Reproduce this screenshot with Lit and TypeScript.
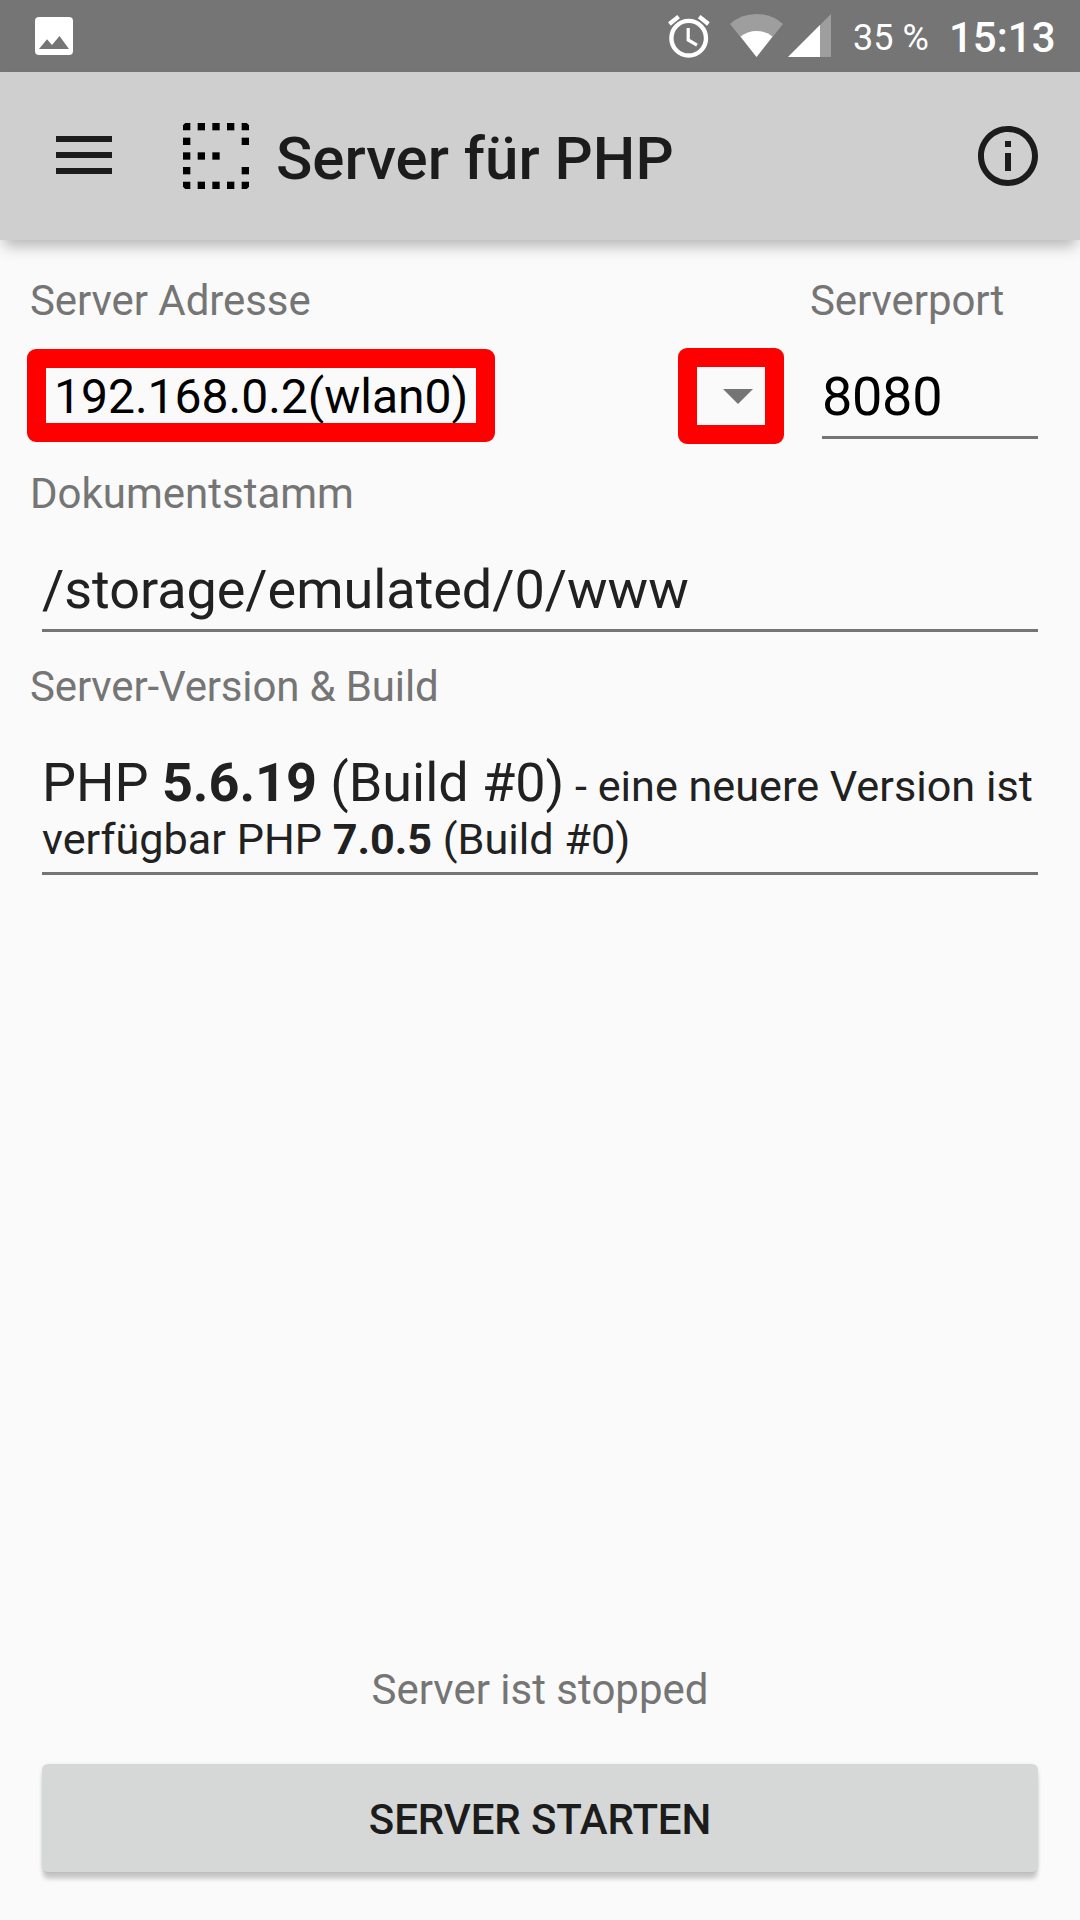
import { LitElement, html, css, svg } from "lit";
import { customElement, property } from "lit/decorators.js";

const DOTS: Array<[number, number]> = [
  [7, 3], [11, 3], [15, 3],
  [3, 7], [19, 7],
  [3, 11], [7, 11], [11, 11],
  [3, 15], [19, 15],
  [7, 19], [11, 19], [15, 19],
];

@customElement("status-bar")
class StatusBar extends LitElement {
  static styles = css`
    :host {
      display: flex;
      align-items: flex-start;
      height: 72px;
      background: #757575;
      color: #fff;
      white-space: nowrap;
    }
    svg { display: block; flex: none; }
    .picture { margin: 17px 0 0 35px; }
    .spacer { flex: 1; }
    .alarm { margin: 15px 20px 0 0; }
    .wifi { margin: 14px 5px 0 0; }
    .signal { margin: 14px 0 0 0; }
    .battery { width: 96px; margin-left: 22px; font-size: 36px; line-height: 42px; padding-top: 17px; }
    .clock { width: 131px; font-size: 42px; font-weight: 500; line-height: 50px; padding-top: 13px; }
  `;

  render() {
    return html`
      <svg class="picture" width="38" height="38" viewBox="0 0 38 38">
        <rect width="38" height="38" rx="4" fill="#fff" />
        <path d="M4 32L12 22.3L17 28L24.5 19L34 32Z" fill="#757575" />
      </svg>
      <div class="spacer"></div>
      <svg class="alarm" width="42" height="43" viewBox="0 0 42 43">
        <circle cx="20.7" cy="23.2" r="17.3" fill="none" stroke="#fff" stroke-width="4.4" />
        <path d="M20.2 13V25L29 30.2" fill="none" stroke="#fff" stroke-width="3.2" />
        <path d="M1.4 9L10.6 1.6M31.2 1.6L40.4 9" fill="none" stroke="#fff" stroke-width="4.2" />
      </svg>
      <svg class="wifi" width="53" height="43" viewBox="0 0 53 43">
        <path d="M0 10Q11 0 26.5 0T53 10L26.5 43Z" fill="#9e9e9e" />
        <path d="M10.5 22.6Q17.5 17 26.5 17T42.5 22.6L26.5 43Z" fill="#fff" />
      </svg>
      <svg class="signal" width="43" height="43" viewBox="0 0 43 43">
        <path d="M43 0V43H0Z" fill="#9e9e9e" />
        <path d="M32 11V43H0Z" fill="#fff" />
      </svg>
      <div class="battery">35 %</div>
      <div class="clock">15:13</div>
    `;
  }
}

@customElement("app-bar")
class AppBar extends LitElement {
  @property() heading = "";

  static styles = css`
    :host {
      display: flex;
      align-items: center;
      height: 168px;
      padding: 0 36px 0 56px;
      box-sizing: border-box;
      background: #cfcfcf;
      color: #1c1c1c;
      box-shadow: 0 10px 14px -4px rgba(0, 0, 0, 0.28);
      white-space: nowrap;
    }
    svg { display: block; flex: none; }
    .menu { margin: 0 71px 2px 0; }
    .logo { margin-right: 27px; }
    .title { flex: 1; font-size: 60px; font-weight: 500; line-height: 70px; padding-top: 6px; }
  `;

  render() {
    return html`
      <svg class="menu" width="56" height="38" viewBox="0 0 56 38">
        <path d="M0 0H56V6H0ZM0 16H56V22H0ZM0 32H56V38H0Z" fill="#1c1c1c" />
      </svg>
      <svg class="logo" width="66" height="66" viewBox="3 3 18 18">
        ${DOTS.map(([x, y]) => svg`<rect x=${x} y=${y} width="2" height="2" />`)}
        <path d="M3 5V3.600L3.600 3H5V5ZM19 3H20.400L21 3.600V5H19ZM3 19H5V21H3.600L3 20.400ZM19 19H21V20.400L20.400 21H19Z" />
      </svg>
      <div class="title">${this.heading}</div>
      <svg class="info" width="72" height="72" viewBox="0 0 24 24">
        <path fill="#1c1c1c" d="M11 17h2v-6h-2v6zm1-15C6.480 2 2 6.480 2 12s4.480 10 10 10 10-4.480 10-10S17.520 2 12 2zm0 18c-4.410 0-8-3.590-8-8s3.590-8 8-8 8 3.590 8 8-3.590 8-8 8zM11 9h2V7h-2v2z" />
      </svg>
    `;
  }
}

@customElement("app-root")
class AppRoot extends LitElement {
  static styles = css`
    :host {
      display: flex;
      flex-direction: column;
      height: 1920px;
      overflow: hidden;
      background: #fafafa;
      color: #212121;
      font-family: Roboto, "Liberation Sans", sans-serif;
      font-size: 42px;
      line-height: 50px;
      white-space: nowrap;
    }
    status-bar, app-bar { flex: none; }
    .form { display: flex; flex-direction: column; gap: 30px; padding: 36px 42px 0 30px; }
    .row { display: flex; }
    .address { width: 780px; }
    .port { flex: 1; }
    .label { color: #757575; }
    .tight { letter-spacing: -0.07px; }
    .tighter { letter-spacing: -0.15px; }
    .input {
      margin-left: 12px;
      padding: 39px 0 7px;
      border-bottom: 3px solid #757575;
      font-size: 54px;
      line-height: 64px;
      letter-spacing: -0.04px;
    }
    .number { color: #000; letter-spacing: -0.3px; }
    .details { font-size: 43.2px; line-height: 50px; letter-spacing: 0; }
    .large { font-size: 54px; line-height: 64px; letter-spacing: -0.04px; }
    .spinner {
      position: relative;
      display: flex;
      justify-content: space-between;
      align-items: flex-start;
      padding: 43px 57px 0 24px;
      color: #000;
      font-size: 48px;
      line-height: 56px;
    }
    .caret { display: block; margin-top: 20px; }
    .mark { position: absolute; box-sizing: border-box; border: 19px solid #f00; border-radius: 9px; }
    .mark-address { left: -3px; top: 23px; width: 468px; height: 93px; }
    .mark-caret { left: 648px; top: 22px; width: 106px; height: 96px; }
    .footer { margin-top: auto; padding: 0 42px 48px; display: flex; flex-direction: column; gap: 49px; }
    .state { text-align: center; color: #757575; }
    .button {
      height: 108px;
      padding: 3px 0 0;
      border: 0;
      border-radius: 6px;
      background: #d6d8d7;
      color: #1c1c1c;
      font: 500 42px/50px Roboto, "Liberation Sans", sans-serif;
      letter-spacing: -0.12px;
      box-shadow: 0 8px 4px -1px rgba(0, 0, 0, 0.19), 0 1px 4px rgba(0, 0, 0, 0.1);
    }
  `;

  render() {
    return html`
      <status-bar></status-bar>
      <app-bar heading="Server für PHP"></app-bar>
      <div class="form">
        <div class="row">
          <div class="address">
            <div class="label tight">Server Adresse</div>
            <div class="spinner">
              <span>192.168.0.2(wlan0)</span>
              <svg class="caret" width="30" height="15" viewBox="0 0 30 15"><path d="M0 0H30L15 15Z" fill="#757575" /></svg>
              <div class="mark mark-address"></div>
              <div class="mark mark-caret"></div>
            </div>
          </div>
          <div class="port">
            <div class="label tight">Serverport</div>
            <div class="input number">8080</div>
          </div>
        </div>
        <div>
          <div class="label">Dokumentstamm</div>
          <div class="input">/storage/emulated/0/www</div>
        </div>
        <div>
          <div class="label tighter">Server-Version &amp; Build</div>
          <div class="input details"><span class="large">PHP <b>5.6.19</b> (Build #0)</span> - eine neuere Version ist<br />verfügbar PHP <b>7.0.5</b> (Build #0)</div>
        </div>
      </div>
      <div class="footer">
        <div class="state">Server ist stopped</div>
        <button class="button">SERVER STARTEN</button>
      </div>
    `;
  }
}
